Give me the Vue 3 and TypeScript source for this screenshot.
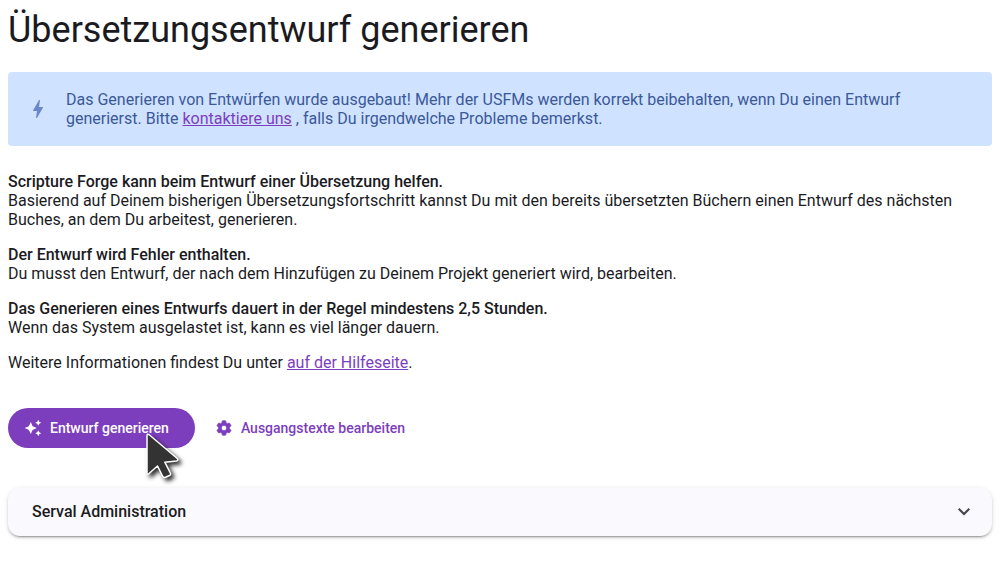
<script setup lang="ts">
import { ref } from 'vue'

interface Note {
  title: string
  text: string
}

const notes: Note[] = [
  {
    title: 'Scripture Forge kann beim Entwurf einer Übersetzung helfen.',
    text: 'Basierend auf Deinem bisherigen Übersetzungsfortschritt kannst Du mit den bereits übersetzten Büchern einen Entwurf des nächsten Buches, an dem Du arbeitest, generieren.',
  },
  {
    title: 'Der Entwurf wird Fehler enthalten.',
    text: 'Du musst den Entwurf, der nach dem Hinzufügen zu Deinem Projekt generiert wird, bearbeiten.',
  },
  {
    title: 'Das Generieren eines Entwurfs dauert in der Regel mindestens 2,5 Stunden.',
    text: 'Wenn das System ausgelastet ist, kann es viel länger dauern.',
  },
]

const expanded = ref(false)
</script>

<template>
  <main class="page">
    <h1>Übersetzungsentwurf generieren</h1>

    <div class="notice">
      <svg class="icon notice-icon" viewBox="0 0 24 24" aria-hidden="true">
        <path d="M11 21h-1l1-7H7.500c-.58 0-.57-.32-.38-.66.190-.34.050-.08.070-.12C8.480 10.940 10.420 7.540 13 3h1l-1 7h3.500c.49 0 .56.33.470.510l-.07.150C12.960 17.550 11 21 11 21z" />
      </svg>
      <span>Das Generieren von Entwürfen wurde ausgebaut! Mehr der USFMs werden korrekt beibehalten, wenn Du einen Entwurf generierst. Bitte <a href="#kontakt">kontaktiere uns</a> , falls Du irgendwelche Probleme bemerkst.</span>
    </div>

    <section class="info">
      <p v-for="note in notes" :key="note.title">
        <strong>{{ note.title }}</strong><br />{{ note.text }}
      </p>
      <p>Weitere Informationen findest Du unter <a href="#hilfe">auf der Hilfeseite</a>.</p>
    </section>

    <div class="actions">
      <button type="button" class="button filled">
        <svg class="button-icon" viewBox="0 0 24 24" aria-hidden="true">
          <path d="M19 9l1.250-2.750L23 5l-2.750-1.250L19 1l-1.250 2.750L15 5l2.750 1.250L19 9zm-7.500.5L9 4 6.500 9.500 1 12l5.500 2.500L9 20l2.500-5.500L17 12l-5.500-2.500zM19 15l-1.250 2.750L15 19l2.750 1.250L19 23l1.250-2.750L23 19l-2.750-1.250L19 15z" />
        </svg>
        Entwurf generieren
        <svg class="cursor" viewBox="0 0 44 56" aria-hidden="true">
          <path class="cursor-arrow" d="M3 6V43Q3 45 5 43.500L13.500 36L18.500 46Q19.500 48 21.500 47.300L25.500 45.500Q27.300 44.500 26.300 42.800L20.800 32.200L32.500 30.900Q35 30.300 33 28.300L5.500 5Q3 3 3 6Z" />
        </svg>
      </button>
      <button type="button" class="button plain">
        <svg class="button-icon" viewBox="0 0 24 24" aria-hidden="true">
          <path class="gear" d="M19.140 12.940c.04-.3.060-.61.060-.94 0-.32-.02-.64-.07-.94l2.030-1.580c.18-.14.230-.41.120-.61l-1.920-3.320c-.12-.22-.37-.29-.59-.22l-2.390.96c-.5-.38-1.030-.7-1.620-.94l-.36-2.540c-.04-.24-.24-.41-.48-.41h-3.840c-.24 0-.43.17-.47.410l-.36 2.540c-.59.24-1.130.57-1.620.94l-2.390-.96c-.22-.08-.47 0-.59.220L2.740 8.870c-.12.21-.08.470.120.610l2.030 1.580c-.05.3-.09.63-.09.94s.02.640.070.940l-2.030 1.580c-.18.14-.23.41-.12.610l1.920 3.320c.12.220.37.290.59.220l2.390-.96c.5.380 1.030.7 1.620.94l.36 2.540c.05.24.24.410.48.410h3.840c.24 0 .44-.17.470-.41l.36-2.540c.59-.24 1.130-.56 1.620-.94l2.390.96c.22.080.470 0 .59-.22l1.920-3.320c.12-.22.070-.47-.12-.61l-2.010-1.580zM12 15.600c-1.980 0-3.600-1.620-3.600-3.600s1.620-3.600 3.600-3.600 3.600 1.620 3.600 3.600-1.620 3.600-3.600 3.600z" />
        </svg>
        Ausgangstexte bearbeiten
      </button>
    </div>

    <button type="button" class="panel" :aria-expanded="expanded" @click="expanded = !expanded">
      <span>Serval Administration</span>
      <svg class="icon chevron" viewBox="0 -960 960 960" aria-hidden="true">
        <path d="M480-345 240-585l56-56 184 183 184-183 56 56-240 240Z" />
      </svg>
    </button>
  </main>
</template>

<style>
body {
  background: #fff;
}
</style>

<style scoped>
.page {
  padding: 8px;
  color: #1b1b1f;
  font: 400 16px/19px Roboto, sans-serif;
}

h1 {
  margin: 0;
  font-size: 36px;
  font-weight: 400;
  line-height: 44px;
}

svg {
  fill: currentColor;
  flex-shrink: 0;
}

a {
  color: #7d3ebd;
}

.notice {
  display: flex;
  align-items: center;
  gap: 16px;
  margin-top: 20px;
  padding: 18px;
  border-radius: 4px;
  background: #cfe2ff;
  color: #3b5998;
}

.icon {
  width: 24px;
  height: 24px;
}

.notice-icon {
  color: #6b87c8;
}

.chevron {
  color: #46434e;
}

.info {
  margin-top: 26px;
}

.info p {
  margin: 0 0 16px;
}

strong {
  font-weight: 500;
}

.actions {
  display: flex;
  align-items: center;
  gap: 8px;
  margin-top: 36px;
}

.button {
  position: relative;
  display: flex;
  align-items: center;
  gap: 8px;
  height: 40px;
  border: 0;
  border-radius: 20px;
  font: 500 14px/20px Roboto, sans-serif;
}

.filled {
  padding: 0 26px 0 16px;
  background: #7d3ebd;
  color: #fff;
}

.plain {
  padding: 0 12px;
  background: transparent;
  color: #7d3ebd;
}

.button-icon {
  width: 18px;
  height: 18px;
}

.gear {
  stroke: currentColor;
  stroke-width: 1px;
}

.cursor {
  position: absolute;
  top: 22px;
  left: 136px;
  width: 44px;
  height: 56px;
  filter: drop-shadow(3px 3px 2px rgba(0, 0, 0, 0.8));
  pointer-events: none;
}

.cursor-arrow {
  fill: #333;
  stroke: #fff;
  stroke-width: 1.5;
  stroke-linejoin: round;
}

.panel {
  display: flex;
  align-items: center;
  justify-content: space-between;
  width: 100%;
  height: 48px;
  margin-top: 40px;
  padding: 0 16px 0 24px;
  border: 0;
  border-radius: 12px;
  background: #faf9fd;
  box-shadow: 0 3px 1px -2px rgba(0, 0, 0, 0.2), 0 2px 2px rgba(0, 0, 0, 0.14), 0 1px 5px rgba(0, 0, 0, 0.12);
  color: #1b1b1f;
  font: 500 16px/24px Roboto, sans-serif;
}
</style>
